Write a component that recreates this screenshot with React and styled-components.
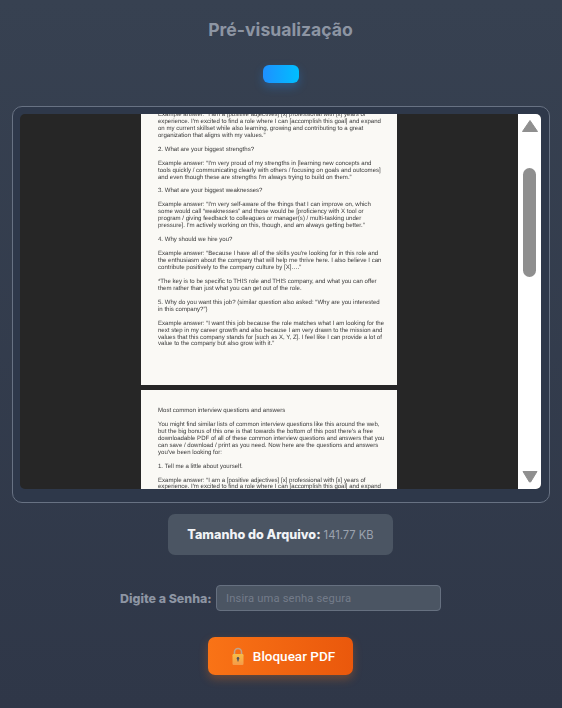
import React from "react";
import styled, { createGlobalStyle } from "styled-components";

const GlobalStyle = createGlobalStyle`
  html, body {
    margin: 0;
    padding: 0;
  }
  body {
    background: #333c4e;
  }
`;

const Page = styled.div`
  width: 562px;
  height: 708px;
  overflow: hidden;
  padding: 18px 1px 0 0;
  box-sizing: border-box;
  display: flex;
  flex-direction: column;
  align-items: center;
  background: linear-gradient(180deg, #374151 0%, #2f3748 100%);
`;

const Title = styled.h2`
  margin: 0;
  height: 24px;
  font-family: "Inter", sans-serif;
  font-weight: 700;
  font-size: 17.6px;
  line-height: 24px;
  color: #8d95a3;
`;

const BlueButton = styled.button`
  width: 36px;
  height: 18px;
  margin-top: 23px;
  padding: 0;
  border: 0;
  border-radius: 6px;
  background: linear-gradient(90deg, #1e90ff, #00bfff);
  box-shadow: 0 4px 10px rgba(30, 144, 255, 0.3);
`;

const Panel = styled.section`
  align-self: flex-start;
  width: 538px;
  height: 397px;
  margin: 23px 0 0 12px;
  box-sizing: border-box;
  padding: 7px 8px 13px 7px;
  border: 1px solid #687283;
  border-radius: 10px;
  background: #2e384a;
`;

const Viewer = styled.div`
  height: 100%;
  display: flex;
  overflow: hidden;
  border-radius: 5px;
  background: #262626;
`;

const Pages = styled.div`
  flex: 1;
  overflow: hidden;
  display: flex;
  flex-direction: column;
  align-items: center;
  gap: 5px;
`;

const Sheet = styled.div`
  flex: none;
  width: 256px;
  height: ${(p) => p.$height}px;
  margin-top: ${(p) => p.$offset || 0}px;
  box-sizing: border-box;
  padding: ${(p) => p.$top}px 0 0 17px;
  background: #faf9f5;
  overflow: hidden;
  font-family: "Liberation Sans", Arial, sans-serif;
  font-size: 6.07px;
  line-height: 6.95px;
  color: #3a3a3a;
  white-space: pre;
  text-rendering: geometricPrecision;
  filter: blur(0.3px);
`;

const ScrollBar = styled.div`
  flex: none;
  width: 23px;
  display: flex;
  flex-direction: column;
  align-items: center;
  padding: 6px 0;
  box-sizing: border-box;
  background: #fff;
`;

const Thumb = styled.div`
  width: 13px;
  height: 109px;
  margin-top: 36px;
  margin-bottom: auto;
  border-radius: 7px;
  background: #8f8f8f;
`;

const ArrowIcon = styled.svg`
  flex: none;
  display: block;
  width: 16px;
  height: 12px;
  fill: #8f8f8f;
`;

const SizeBox = styled.div`
  width: 225px;
  height: 41px;
  margin-top: 11px;
  display: flex;
  align-items: center;
  justify-content: center;
  gap: 3px;
  border-radius: 7px;
  background: #4b5563;
  font-family: "Inter", sans-serif;
`;

const SizeLabel = styled.strong`
  font-weight: 800;
  font-size: 12.6px;
  color: #f1f3f6;
`;

const SizeValue = styled.span`
  font-size: 11.2px;
  color: #9ca3af;
`;

const PasswordRow = styled.div`
  width: 321px;
  margin-top: 30px;
  display: flex;
  align-items: center;
  gap: 4px;
`;

const PasswordLabel = styled.label`
  flex: none;
  width: 92px;
  font-family: "Inter", sans-serif;
  font-weight: 800;
  font-size: 12.4px;
  white-space: nowrap;
  color: #8d95a3;
`;

const PasswordInput = styled.input`
  width: 225px;
  height: 26px;
  box-sizing: border-box;
  padding: 0 9px;
  border: 1px solid #667080;
  border-radius: 4px;
  outline: none;
  background: #4b5563;
  font-family: "Roboto", sans-serif;
  font-size: 11.2px;
  letter-spacing: 0.15px;
  color: #fff;

  &::placeholder {
    color: #747c8a;
    opacity: 1;
  }
`;

const LockButton = styled.button`
  width: 145px;
  height: 38px;
  margin-top: 26px;
  padding: 0 0 0 5px;
  display: flex;
  align-items: center;
  justify-content: center;
  gap: 8px;
  border: 0;
  border-radius: 7px;
  background: linear-gradient(90deg, #f97316, #ea580c);
  box-shadow: 0 4px 10px rgba(249, 115, 22, 0.3);
  font-family: "Roboto", sans-serif;
  font-weight: 500;
  font-size: 13.5px;
  color: #fff;
`;

const firstSheet = `Example answer: “I am a [positive adjectives] [x] professional with [x] years of
experience. I'm excited to find a role where I can [accomplish this goal] and expand
on my current skillset while also learning, growing and contributing to a great
organization that aligns with my values.”

2. What are your biggest strengths?

Example answer: “I'm very proud of my strengths in [learning new concepts and
tools quickly / communicating clearly with others / focusing on goals and outcomes]
and even though these are strengths I'm always trying to build on them.”

3. What are your biggest weaknesses?

Example answer: “I'm very self-aware of the things that I can improve on, which
some would call “weaknesses” and those would be [proficiency with X tool or
program / giving feedback to colleagues or manager(s) / multi-tasking under
pressure]. I'm actively working on this, though, and am always getting better.”

4. Why should we hire you?

Example answer: “Because I have all of the skills you're looking for in this role and
the enthusiasm about the company that will help me thrive here. I also believe I can
contribute positively to the company culture by [X]….”

*The key is to be specific to THIS role and THIS company, and what you can offer
them rather than just what you can get out of the role.

5. Why do you want this job? (similar question also asked: “Why are you interested
in this company?”)

Example answer: “I want this job because the role matches what I am looking for the
next step in my career growth and also because I am very drawn to the mission and
values that this company stands for [such as X, Y, Z]. I feel like I can provide a lot of
value to the company but also grow with it.”`;

const secondSheet = `Most common interview questions and answers

You might find similar lists of common interview questions like this around the web,
but the big bonus of this one is that towards the bottom of this post there's a free
downloadable PDF of all of these common interview questions and answers that you
can save / download / print as you need. Now here are the questions and answers
you've been looking for:

1. Tell me a little about yourself.

Example answer: “I am a [positive adjectives] [x] professional with [x] years of
experience. I'm excited to find a role where I can [accomplish this goal] and expand`;

const Arrow = ({ down }) => (
  <ArrowIcon viewBox="0 0 16 12">
    <path
      d={down ? "M1 0.5H15L8.6 11H7.4Z" : "M8 0.5L15.5 11.5H0.5Z"}
      stroke="#8f8f8f"
      strokeLinejoin="round"
    />
  </ArrowIcon>
);

const LockIcon = () => (
  <svg width="14" height="18" viewBox="0 0 14 18">
    <defs>
      <linearGradient id="lockBody" x1="0" y1="0" x2="0" y2="1">
        <stop offset="0" stopColor="#f8bd45" />
        <stop offset="1" stopColor="#f59a4a" />
      </linearGradient>
    </defs>
    <path d="M3.5 8V5a3.5 3.5 0 0 1 7 0v3" fill="none" stroke="#c0a48d" strokeWidth="1.6" />
    <rect x="1.5" y="7" width="11" height="11" rx="1.2" fill="url(#lockBody)" />
    <circle cx="7" cy="11.4" r="1.3" fill="#55505a" />
    <rect x="6.4" y="11.4" width="1.2" height="3" fill="#55505a" />
  </svg>
);

const App = () => {
  return (
    <>
      <GlobalStyle />
      <Page>
        <Title>Pré-visualização</Title>
        <BlueButton aria-label="Atualizar" />
        <Panel>
          <Viewer>
            <Pages>
              <Sheet $height={273} $top={0} $offset={-2}>
                {firstSheet}
              </Sheet>
              <Sheet $height={120} $top={18}>
                {secondSheet}
              </Sheet>
            </Pages>
            <ScrollBar>
              <Arrow />
              <Thumb />
              <Arrow down />
            </ScrollBar>
          </Viewer>
        </Panel>
        <SizeBox>
          <SizeLabel>Tamanho do Arquivo:</SizeLabel>
          <SizeValue>141.77 KB</SizeValue>
        </SizeBox>
        <PasswordRow>
          <PasswordLabel htmlFor="senha">Digite a Senha:</PasswordLabel>
          <PasswordInput id="senha" type="password" placeholder="Insira uma senha segura" />
        </PasswordRow>
        <LockButton>
          <LockIcon />
          Bloquear PDF
        </LockButton>
      </Page>
    </>
  );
};

export default App;
